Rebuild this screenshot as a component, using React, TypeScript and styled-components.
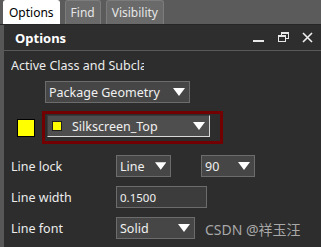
import { FC } from "react";
import styled, { createGlobalStyle } from "styled-components";

const Global = createGlobalStyle`
	html, body { margin: 0; padding: 0; background: #2d2d2d; }
	body { font-family: "Noto Sans", "Noto Sans CJK SC", sans-serif; }
`;

const Arrow: FC = () => (
	<svg width='12' height='8' viewBox='0 0 12 8'>
		<polygon points='0,0 12,0 6,8' fill='#ffffff' />
	</svg>
);

export default function App() {
	return (
		<Wrapper>
			<Global />
			<TabBar>
				<Tab active>Options</Tab>
				<Tab>Find</Tab>
				<Tab>Visibility</Tab>
			</TabBar>
			<Body>
				<Strip />
				<Panel>
					<Header>
						<span>Options</span>
						<HeaderIcons>
							<svg width='12' height='12' viewBox='0 0 12 12'>
								<rect x='0' y='8' width='11' height='2' fill='#e8e8e8' />
							</svg>
							<svg width='11' height='11' viewBox='0 0 11 11'>
								<rect x='3.5' y='0.5' width='7' height='6' fill='none' stroke='#e8e8e8' />
								<rect x='3.5' y='0.5' width='7' height='1.5' fill='#e8e8e8' />
								<rect x='0.5' y='3.5' width='7' height='6' fill='#2e2e2e' stroke='#e8e8e8' />
								<rect x='0.5' y='3.5' width='7' height='1.5' fill='#e8e8e8' />
							</svg>
							<svg width='11' height='11' viewBox='0 0 11 11'>
								<path d='M1 1 L10 10 M10 1 L1 10' stroke='#f0f0f0' strokeWidth='1.6' />
							</svg>
						</HeaderIcons>
					</Header>
					<Content>
						<Caption>Active Class and Subcla</Caption>
						<Indent>
							<Select width={145}>
								<span>Package Geometry</span>
								<Arrow />
							</Select>
						</Indent>
						<ColorRow>
							<Swatch />
							<Highlight>
								<Select width={163} focused>
									<SmallSwatch />
									<span>Silkscreen_Top</span>
									<Arrow />
								</Select>
							</Highlight>
						</ColorRow>
						<Field>
							<Label>Line lock</Label>
							<Select width={55}>
								<span>Line</span>
								<Arrow />
							</Select>
							<Spacer />
							<Select width={54}>
								<span>90</span>
								<Arrow />
							</Select>
						</Field>
						<Field>
							<Label>Line width</Label>
							<Input width={91}>0.1500</Input>
						</Field>
						<Field>
							<Label>Line font</Label>
							<Select width={79}>
								<span>Solid</span>
								<Arrow />
							</Select>
						</Field>
					</Content>
				</Panel>
			</Body>
			<Watermark>CSDN @祥玉汪</Watermark>
		</Wrapper>
	);
}

const Wrapper = styled.div`
	position: relative;
	width: 321px;
	height: 247px;
	overflow: hidden;
	background: #2d2d2d;
	display: flex;
	flex-direction: column;
`;

const TabBar = styled.div`
	height: 26px;
	background: #5b5b5b;
	display: flex;
	align-items: flex-end;
	gap: 5px;
	padding-left: 3px;
	border-bottom: 1px solid #262626;
	box-sizing: border-box;
`;

const Tab = styled.div<{ active?: boolean }>`
	height: 24px;
	box-sizing: border-box;
	padding: 0 5px;
	display: flex;
	align-items: center;
	font-size: 12px;
	border-radius: 3px 3px 0 0;
	background: ${(p) => (p.active ? "#ffffff" : "#6a6a6a")};
	color: ${(p) => (p.active ? "#000000" : "#e6e6e6")};
	border: 1px solid ${(p) => (p.active ? "#ffffff" : "#7c7c7c")};
	border-bottom: none;
`;

const Body = styled.div`
	flex: 1;
	display: flex;
`;

const Strip = styled.div`
	width: 4px;
	background: #575757;
`;

const Panel = styled.div`
	flex: 1;
	display: flex;
	flex-direction: column;
`;

const Header = styled.div`
	height: 26px;
	box-sizing: border-box;
	background: #2e2e2e;
	border-bottom: 1px solid #5a5a5a;
	display: flex;
	align-items: center;
	justify-content: space-between;
	padding: 0 8px 0 11px;
	color: #ffffff;
	font-size: 13px;
	font-weight: 700;
`;

const HeaderIcons = styled.div`
	display: flex;
	align-items: center;
	gap: 13px;
`;

const Content = styled.div`
	display: flex;
	flex-direction: column;
	padding: 5px 0 0 7px;
	color: #ececec;
	font-size: 12.5px;
`;

const Caption = styled.div`
	width: 133px;
	height: 20px;
	line-height: 20px;
	overflow: hidden;
	white-space: nowrap;
	margin-bottom: 5px;
`;

const Indent = styled.div`
	padding-left: 34px;
`;

const Select = styled.div<{ width: number; focused?: boolean }>`
	width: ${(p) => p.width}px;
	height: 22px;
	box-sizing: border-box;
	background: ${(p) => (p.focused ? "#4e4e4e" : "#464646")};
	border: 1px solid ${(p) => (p.focused ? "#3a3a3a" : "#6c6c6c")};
	border-right-color: ${(p) => (p.focused ? "#d8d8d8" : "#6c6c6c")};
	border-bottom-color: ${(p) => (p.focused ? "#d8d8d8" : "#6c6c6c")};
	display: flex;
	align-items: center;
	gap: 10px;
	padding: 0 4px 0 3px;
	color: #f0f0f0;
	white-space: nowrap;
	span {
		flex: 1;
	}
`;

const ColorRow = styled.div`
	display: flex;
	align-items: center;
	margin: 8px 0 11px 6px;
	gap: 7px;
`;

const Swatch = styled.div`
	width: 18px;
	height: 18px;
	box-sizing: border-box;
	background: #ffff00;
	border: 1px solid #000000;
`;

const Highlight = styled.div`
	width: 181px;
	height: 33px;
	box-sizing: border-box;
	border: 3px solid #720000;
	padding: 1px 0 0 2px;
`;

const SmallSwatch = styled.div`
	width: 10px;
	height: 10px;
	box-sizing: border-box;
	background: #ffff00;
	border: 1px solid #202020;
	margin-left: 1px;
`;

const Field = styled.div`
	display: flex;
	align-items: center;
	height: 22px;
	margin-bottom: 9px;
`;

const Label = styled.div`
	width: 105px;
`;

const Spacer = styled.div`
	width: 30px;
`;

const Input = styled.div<{ width: number }>`
	width: ${(p) => p.width}px;
	height: 22px;
	box-sizing: border-box;
	background: #3c3c3c;
	border: 1px solid #6c6c6c;
	display: flex;
	align-items: center;
	padding-left: 3px;
	font-size: 11.5px;
	color: #f0f0f0;
`;

const Watermark = styled.div`
	position: absolute;
	left: 205px;
	top: 219px;
	font-size: 14px;
	color: #a8a8a8;
	font-family: "Noto Sans", "Noto Sans CJK SC", sans-serif;
	white-space: nowrap;
`;
